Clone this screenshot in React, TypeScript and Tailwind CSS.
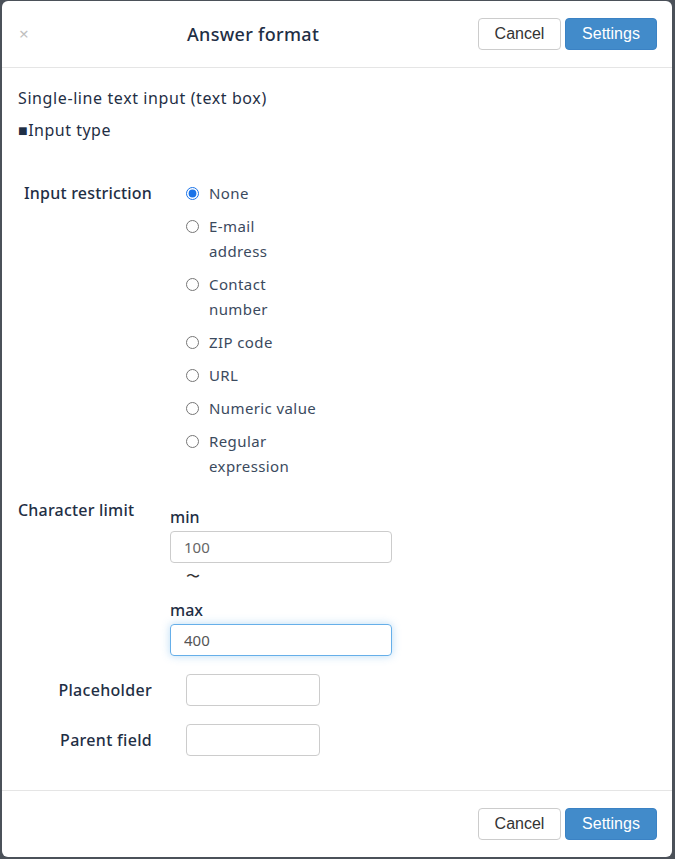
import React, { useState } from 'react';

const options = [
  { id: 'none', label: ['None'] },
  { id: 'email', label: ['E-mail', 'address'] },
  { id: 'tel', label: ['Contact', 'number'] },
  { id: 'zip', label: ['ZIP code'] },
  { id: 'url', label: ['URL'] },
  { id: 'num', label: ['Numeric value'] },
  { id: 'regex', label: ['Regular', 'expression'] },
];

const font = { fontFamily: '"Noto Sans", "Open Sans", sans-serif' };

const Buttons = () => (
  <div className="flex gap-1" style={{ fontFamily: '"Liberation Sans", Arial, sans-serif' }}>
    <button className="h-8 w-[83px] rounded border border-[#cccccc] bg-white text-[16px] text-[#333]">Cancel</button>
    <button className="h-8 w-[92px] rounded border border-[#3b82c4] bg-[#428bca] text-[16px] text-white">Settings</button>
  </div>
);

export default function App() {
  const [restriction, setRestriction] = useState('none');
  const [min, setMin] = useState('100');
  const [max, setMax] = useState('400');

  return (
    <div className="h-[859px] w-[675px] bg-[#4b5159] pt-px pl-[2px]" style={font}>
      <div className="flex h-[856px] w-[670px] flex-col rounded-md bg-white text-[#1f2f45]">
        {/* Header */}
        <div className="flex h-[67px] items-center border-b border-[#e5e5e5] pl-[17px] pr-[15px]">
          <span className="w-[20px] text-[17px] text-[#c0c0c0]">×</span>
          <h1 className="flex-1 pl-[148px] text-[18px] font-medium tracking-[0.3px]">Answer format</h1>
          <Buttons />
        </div>

        {/* Body */}
        <div className="flex-1 px-4 pt-[20px] text-[15px]">
          <p className="text-[16px] leading-[20px] tracking-[0.6px]">Single-line text input (text box)</p>
          <p className="mt-[12px] text-[16px] leading-[20px] tracking-[0.5px]">■Input type</p>

          <div className="mt-[42px] flex">
            <div className="w-[168px] pl-[6px] text-[16px] font-medium leading-[22px] tracking-[0.2px]">Input restriction</div>
            <div className="flex flex-col gap-[9px]">
              {options.map((o) => (
                <label key={o.id} className="flex cursor-pointer items-start text-[#3b4a5e]">
                  <input
                    type="radio"
                    name="restriction"
                    checked={restriction === o.id}
                    onChange={() => setRestriction(o.id)}
                    className="mt-[5px] mr-[10px] h-[13px] w-[13px] accent-[#1a73e8]"
                  />
                  <span className="-mt-[1px] leading-[25px] tracking-[0.4px]">
                    {o.label.map((l, i) => (
                      <span key={i} className="block">{l}</span>
                    ))}
                  </span>
                </label>
              ))}
            </div>
          </div>

          <div className="mt-[18px] flex">
            <div className="w-[152px] pt-[2px] text-[16px] font-medium leading-[22px] tracking-[0.2px]">Character limit</div>
            <div className="pt-[10px]">
              <div className="text-[16px] font-medium leading-[20px]">min</div>
              <input
                value={min}
                onChange={(e) => setMin(e.target.value)}
                className="mt-[4px] h-[32px] w-[222px] rounded border border-[#cccccc] px-[13px] text-[15px] text-[#666] outline-none"
              />
              <div className="pl-[16px] text-[14px] font-light leading-[26px] text-[#333]">〜</div>
              <div className="mt-[11px] text-[16px] font-medium leading-[20px]">max</div>
              <input
                autoFocus
                value={max}
                onChange={(e) => setMax(e.target.value)}
                className="mt-[4px] h-[32px] w-[222px] rounded border border-[#66afe9] px-[13px] text-[15px] text-[#555] caret-[#111] shadow-[0_0_8px_rgba(102,175,233,0.45)] outline-none"
              />
            </div>
          </div>

          <div className="mt-[18px] flex flex-col gap-[18px]">
            {['Placeholder', 'Parent field'].map((l) => (
              <div key={l} className="flex items-center">
                <div className="w-[136px] pr-[2px] text-right text-[16px] font-medium tracking-[0.3px]">{l}</div>
                <input className="ml-[32px] h-[32px] w-[134px] rounded border border-[#cccccc] px-2 outline-none" />
              </div>
            ))}
          </div>
        </div>

        {/* Footer */}
        <div className="flex h-[67px] items-start justify-end border-t border-[#e5e5e5] pt-[17px] pr-[15px]">
          <Buttons />
        </div>
      </div>
    </div>
  );
}
